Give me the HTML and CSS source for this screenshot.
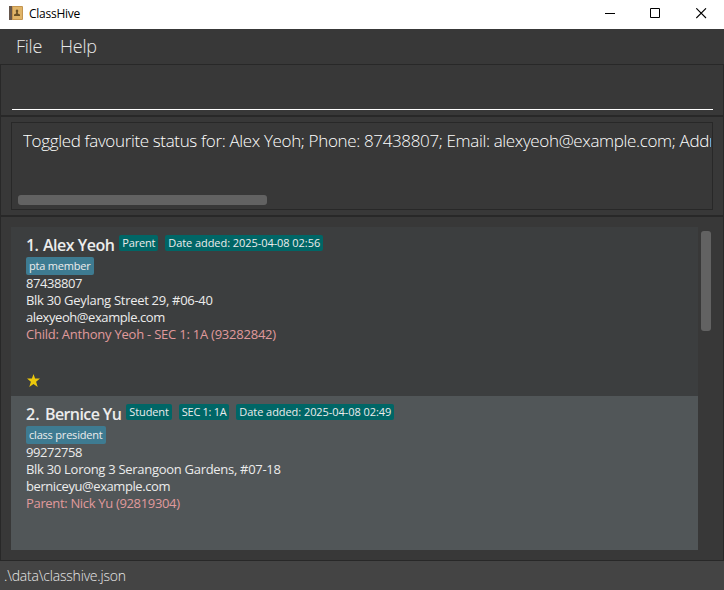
FILE: index.html
```html
<!DOCTYPE html>
<html lang="en">
<head>
<meta charset="utf-8">
<title>ClassHive</title>
<link rel="stylesheet" href="styles.css">
</head>
<body>
<div class="window">
  <header class="titlebar">
    <svg class="app-icon" width="14" height="14" viewBox="0 0 14 14">
      <rect width="14" height="14" rx="1" fill="#c4954f"/>
      <rect x="4" y="1" width="9" height="12" fill="#e0b468"/>
      <rect width="3" height="14" fill="#65564c"/>
      <path d="M8 3.500a1.500 1.500 0 0 1 .9 2.500V7.500L11 8.500V10H5V8.500L7.100 7.500V6A1.500 1.500 0 0 1 8 3.500Z" fill="#6b5127"/>
    </svg>
    <span class="app-title">ClassHive</span>
    <div class="controls">
      <svg width="11" height="11" viewBox="0 0 11 11"><path d="M1 5.500H11" stroke="#000"/></svg>
      <svg width="11" height="11" viewBox="0 0 11 11"><path d="M.5 .5H9.500V9.500H.5Z" fill="none" stroke="#000"/></svg>
      <svg width="11" height="11" viewBox="0 0 11 11"><path d="M.3 .3L10 10M10 .3L.3 10" stroke="#000" stroke-width="1.100"/></svg>
    </div>
  </header>
  <nav class="menu"><span>File</span><span>Help</span></nav>
  <section class="pane command"><div class="command-field"></div></section>
  <section class="pane result">
    <div class="result-box">
      <div class="result-text">Toggled favourite status for: Alex Yeoh; Phone: 87438807; Email: alexyeoh@example.com; Addr</div>
      <div class="hthumb"></div>
    </div>
  </section>
  <section class="pane people">
    <div class="list">
      <article class="card">
        <div class="heading"><span class="index first">1.</span><h2 class="name">Alex Yeoh</h2><span class="badge">Parent</span><span class="badge date">Date added: 2025-04-08 02:56</span></div>
        <div class="tags"><span class="tag">pta member</span></div>
        <p class="phone">87438807</p>
        <p class="address">Blk 30 Geylang Street 29, #06-40</p>
        <p class="email">alexyeoh@example.com</p>
        <p class="relation child">Child: Anthony Yeoh - SEC 1: 1A (93282842)</p>
        <svg class="star" width="13" height="13" viewBox="0 0 13 13"><path d="M6.500 0L8.100 4.600H13L9.100 7.700L10.700 13L6.500 9.900L2.300 13L3.900 7.700L0 4.600H4.900Z" fill="#ecc80c"/></svg>
      </article>
      <article class="card alt">
        <div class="heading"><span class="index">2.</span><h2 class="name">Bernice Yu</h2><span class="badge student">Student</span><span class="badge level">SEC 1: 1A</span><span class="badge date">Date added: 2025-04-08 02:49</span></div>
        <div class="tags"><span class="tag">class president</span></div>
        <p class="phone">99272758</p>
        <p class="address">Blk 30 Lorong 3 Serangoon Gardens, #07-18</p>
        <p class="email">berniceyu@example.com</p>
        <p class="relation">Parent: Nick Yu (92819304)</p>
      </article>
    </div>
    <div class="vthumb"></div>
  </section>
  <footer class="status">.\data\classhive.json</footer>
</div>
</body>
</html>
```

FILE: styles.css
```css
* { box-sizing: border-box; }
body { margin: 0; font-family: "Open Sans", "Noto Sans", sans-serif; background: #383838; }
.window { width: 724px; height: 590px; display: flex; flex-direction: column; overflow: hidden; }
.titlebar { height: 29px; flex: none; background: #fff; display: flex; align-items: center; padding: 0 17px 3px 9px; }
.app-title { margin-left: 6px; font-size: 12px; letter-spacing: -.25px; color: #000; }
.controls { margin-left: auto; display: flex; gap: 35px; }
.controls svg, .app-icon, .star { display: block; }
.menu { height: 35px; flex: none; display: flex; gap: 18px; padding-left: 16px; font-size: 18px; line-height: 35px; font-weight: 300; color: #e8e8e8; letter-spacing: -.25px; }
.pane { flex: none; border: 1px solid #282828; }
.command { height: 52px; padding: 0 10px 5px 11px; display: flex; }
.command-field { flex: 1; border-bottom: 1px solid #fff; }
.result { height: 100px; padding: 5px 10px; }
.result-box { height: 88px; border: 1px solid #282828; overflow: hidden; padding: 5px 0 0 11px; }
.result-text { height: 25px; margin-right: 1px; line-height: 25px; white-space: nowrap; overflow: hidden; font-size: 17px; font-weight: 300; color: #fff; letter-spacing: -.35px; }
.hthumb { width: 249px; height: 10px; margin: 42px 0 0 -5px; border-radius: 3px; background: #626262; }
.people { height: 345px; padding: 10px 11px 10px 10px; display: flex; gap: 3px; }
.list { width: 687px; }
.card { height: 169px; padding: 7px 15px 0; background: #3c3e3f; color: #ececec; }
.card.alt { height: 154px; background: #515658; }
.heading { height: 21px; display: flex; align-items: flex-start; }
.index, .name { font-size: 16px; line-height: 22px; font-weight: 600; white-space: nowrap; }
.index { width: 19px; flex: none; }
.index.first { width: 17px; letter-spacing: -.6px; }
.name { margin: 0 5px 0 0; letter-spacing: -.5px; }
.alt .name { letter-spacing: -.6px; }
.badge { height: 16px; margin: 1px 7px 0 0; padding: 0 3px; border-radius: 2px; background: #066; font-size: 11px; line-height: 16px; white-space: nowrap; letter-spacing: -.2px; }
.badge.date { letter-spacing: -.06px; }
.badge.student { letter-spacing: -.1px; }
.badge.level { letter-spacing: -.3px; }
.tags { display: flex; height: 20px; padding-top: 2px; }
.tag { height: 18px; padding: 0 3px; border-radius: 2px; background: #3e7b91; font-size: 11px; line-height: 18px; white-space: nowrap; letter-spacing: -.2px; }
.card p { margin: 0; height: 17px; line-height: 17px; font-size: 13px; letter-spacing: -.29px; white-space: nowrap; }
.card .phone { letter-spacing: -.45px; }
.card .email { letter-spacing: -.42px; }
.card .relation { color: #e09a9c; letter-spacing: -.33px; }
.card .child { letter-spacing: -.23px; }
.star { margin: 31px 0 0 1px; }
.vthumb { width: 10px; height: 100px; margin-top: 4px; border-radius: 3px; background: #626262; }
.status { flex: 1; background: #444; padding-left: 4px; font-size: 14px; line-height: 29px; font-weight: 300; letter-spacing: -.2px; color: #e8e8e8; }
```
